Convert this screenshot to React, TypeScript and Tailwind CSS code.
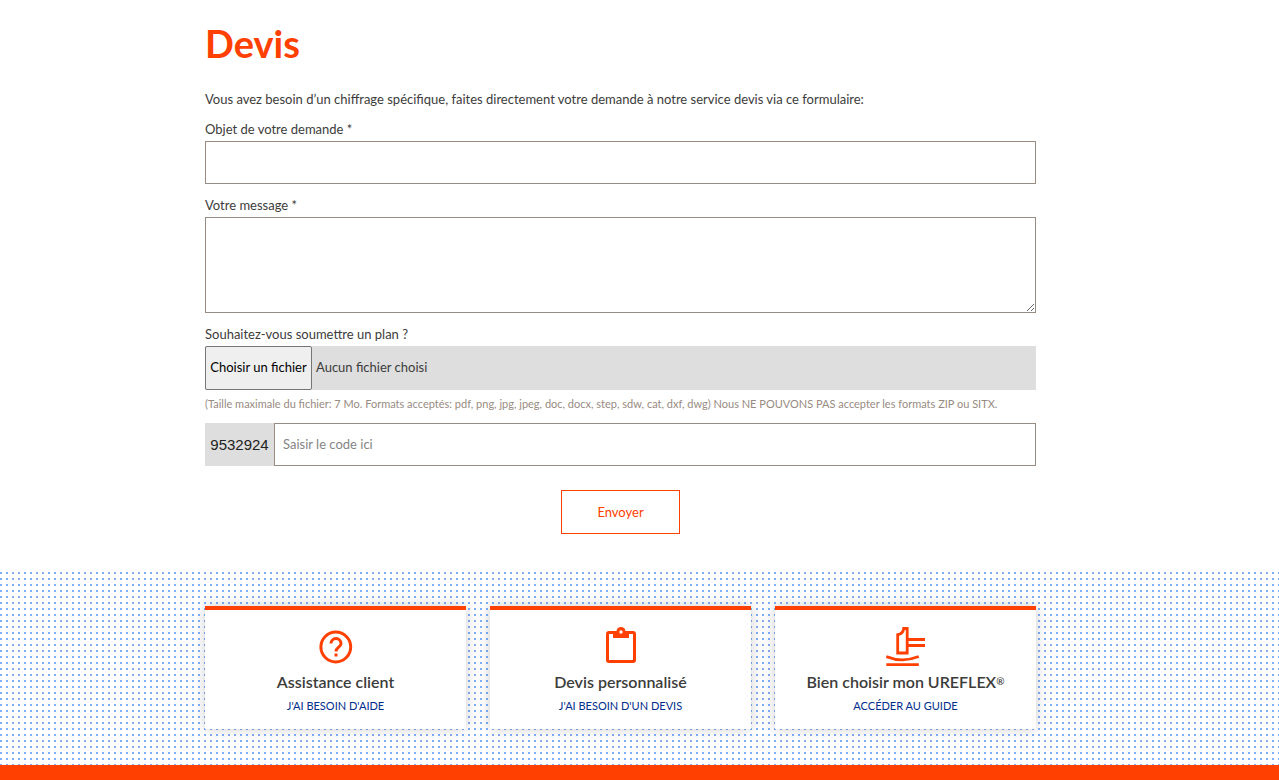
import type { ReactNode } from 'react';

function QuestionIcon() {
  return (
    <svg viewBox="0 0 40 40" className="size-10" fill="none" stroke="#ff4000" strokeWidth="3" aria-hidden="true">
      <circle cx="19.800" cy="21" r="14.900" />
      <path d="M15 17.500a5 5 0 1 1 10 0c0 3.600-5 3.900-5 8" />
      <path d="M18.500 27.500h3v3h-3z" fill="#ff4000" stroke="none" />
    </svg>
  );
}

function ClipboardIcon() {
  return (
    <svg viewBox="0 0 40 40" className="size-10" aria-hidden="true">
      <rect x="6.500" y="6.500" width="27" height="29" rx="1.500" fill="none" stroke="#ff4000" strokeWidth="3" />
      <path d="M12 5h16v7H12z" fill="#ff4000" />
      <circle cx="20" cy="5.500" r="4.500" fill="#ff4000" />
      <circle cx="20" cy="6" r="1.700" fill="#fff" />
    </svg>
  );
}

function HammerIcon() {
  return (
    <svg viewBox="0 0 40 40" className="size-10" fill="none" stroke="#ff4000" strokeWidth="2.800" aria-hidden="true">
      <path d="M11.700 27V8.700c3.500-.5 5.500-2.500 6-6.200h3.500V27z" />
      <path d="M22 13.500h17M22 19.500h17" />
      <path d="M.3 30.500c10 4.200 22 4.200 32.500 0M.3 38.600h32.500" />
    </svg>
  );
}

const cards: { icon: ReactNode; title: ReactNode; link: string }[] = [
  { icon: <QuestionIcon />, title: 'Assistance client', link: "J'AI BESOIN D'AIDE" },
  { icon: <ClipboardIcon />, title: 'Devis personnalisé', link: "J'AI BESOIN D'UN DEVIS" },
  {
    icon: <HammerIcon />,
    title: <>Bien choisir mon UREFLEX<span className="align-[3px] text-[10px] leading-none">®</span></>,
    link: 'ACCÉDER AU GUIDE',
  },
];

export default function App() {
  return (
    <div className="bg-white font-['Lato',sans-serif] text-[13px] leading-5 text-[#3c3c3b]">
      <main className="pt-5 pr-[243px] pb-9 pl-[205px]">
        <h1 className="text-[38px] leading-[46px] font-bold text-[#ff4000]">Devis</h1>
        <p className="mt-[23px]">
          Vous avez besoin d’un chiffrage spécifique, faites directement votre demande à notre service devis via ce formulaire:
        </p>
        <form className="flex flex-col" onSubmit={(e) => e.preventDefault()}>
          <label htmlFor="subject" className="mt-[10px]">Objet de votre demande *</label>
          <input id="subject" type="text" className="mt-[2px] h-[43px] w-full border border-[#978b82] px-2 outline-none" />
          <label htmlFor="message" className="mt-[11px]">Votre message *</label>
          <textarea id="message" className="mt-[2px] h-24 w-full resize border border-[#978b82] p-2 outline-none" />
          <label htmlFor="plan" className="mt-[11px]">Souhaitez-vous soumettre un plan ?</label>
          <label htmlFor="plan" className="relative mt-[2px] flex h-11 items-center gap-1 bg-[#dedede]">
            <span className="flex h-full w-[107px] items-center justify-center rounded-xs border border-[#767676] bg-[#efefef] pb-[2px] text-black">Choisir un fichier</span>
            <span className="pb-[2px]">Aucun fichier choisi</span>
            <input id="plan" type="file" className="sr-only" />
          </label>
          <p className="mt-1 text-[11px] text-[#978b82]">
            (Taille maximale du fichier: 7 Mo. Formats acceptés: pdf, png, jpg, jpeg, doc, docx, step, sdw, cat, dxf, dwg) Nous NE POUVONS PAS accepter les formats ZIP ou SITX.
          </p>
          <div className="mt-[9px] flex h-[43px]">
            <label htmlFor="code" className="flex w-[69px] items-center justify-center bg-[#dedede] font-['Liberation_Sans',sans-serif] text-[15px] text-[#222]">9532924</label>
            <input id="code" type="text" placeholder="Saisir le code ici" className="min-w-0 flex-1 border border-[#978b82] px-2 pb-[2px] outline-none placeholder:text-[#858585]" />
          </div>
          <button type="submit" className="mt-6 h-11 w-[119px] self-center border border-[#ff4000] text-[#ff4000]">Envoyer</button>
        </form>
      </main>
      <section className="bg-[conic-gradient(from_90deg_at_4px_4px,#80aef8_25%,transparent_0)] bg-[length:6px_6px] bg-[position:-4px_-2px] pt-9 pr-[243px] pb-9 pl-[205px]">
        <div className="grid grid-cols-3 gap-6">
          {cards.map((card) => (
            <article key={card.link} className="flex h-[123px] flex-col items-center border-t-4 border-[#ff4000] bg-white pt-4 shadow-[0_0_12px_rgba(0,0,0,0.2)]">
              {card.icon}
              <h2 className="mt-[6px] h-5 text-base leading-5 font-semibold whitespace-nowrap">{card.title}</h2>
              <a href="#" className="mt-1 text-[11px] leading-5 text-[#002d8c]">{card.link}</a>
            </article>
          ))}
        </div>
      </section>
      <footer className="h-[15px] bg-[#ff4000]" />
    </div>
  );
}
